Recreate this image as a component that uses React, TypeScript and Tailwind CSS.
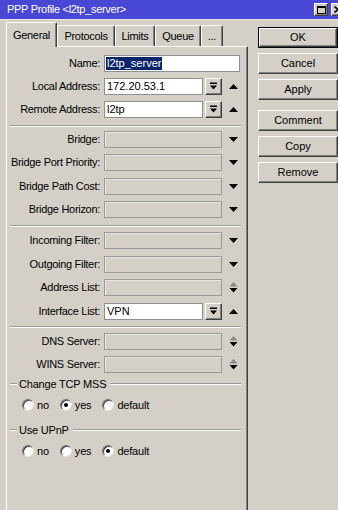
import React from "react";

const raised =
  "border border-t-white border-l-white border-r-[#404040] border-b-[#404040] shadow-[inset_-1px_-1px_0_#808080]";

function ComboIcon() {
  return (
    <svg width="9" height="9" viewBox="0 0 9 9">
      <rect x="1" y="0.5" width="7" height="1.5" fill="#000" />
      <path d="M1 3.5 H8 L4.5 7.5 Z" fill="#000" />
    </svg>
  );
}

function UpArrow() {
  return (
    <svg width="9" height="5" viewBox="0 0 9 5">
      <path d="M0 5 L4.5 0 L9 5 Z" fill="#000" />
    </svg>
  );
}

function DownArrow() {
  return (
    <svg width="9" height="5" viewBox="0 0 9 5">
      <path d="M0 0 H9 L4.5 5 Z" fill="#000" />
    </svg>
  );
}

function UpDown() {
  return (
    <svg width="9" height="11" viewBox="0 0 9 11">
      <path d="M0.5 4.5 L4.5 0 L8.5 4.5 Z" fill="#8a8a8a" />
      <path d="M0.5 6 H8.5 L4.5 10.5 Z" fill="#000" />
    </svg>
  );
}

function Label({ children }: { children: React.ReactNode }) {
  return (
    <div className="w-[94px] pr-[1px] text-right text-[11px] tracking-[-0.3px] leading-none whitespace-nowrap">
      {children}
    </div>
  );
}

function Row({ label, children }: { label: string; children: React.ReactNode }) {
  return (
    <div className="flex items-center h-[17px]">
      <Label>{label}</Label>
      <div className="ml-[3px] flex items-center">{children}</div>
    </div>
  );
}

function ArrowBox({ children }: { children: React.ReactNode }) {
  return <div className="w-[21px] h-[17px] flex items-center justify-center pl-[1px]">{children}</div>;
}

function ComboField({ value }: { value: string }) {
  return (
    <>
      <div className="w-[99px] h-[17px] border border-[#8f8f8f] bg-white flex items-center pl-[2px] text-[11px] leading-none">
        {value}
      </div>
      <div className={`ml-[2px] w-[17px] h-[17px] bg-[#d4d0c8] flex items-center justify-center ${raised}`}>
        <ComboIcon />
      </div>
      <ArrowBox>
        <UpArrow />
      </ArrowBox>
    </>
  );
}

function DisabledField({ kind }: { kind: "down" | "updown" }) {
  return (
    <>
      <div className="w-[118px] h-[17px] border border-[#9a9a9a] bg-[#d4d0c8] shadow-[inset_1px_1px_0_#e8e6e0]" />
      <ArrowBox>{kind === "down" ? <DownArrow /> : <UpDown />}</ArrowBox>
    </>
  );
}

function Separator() {
  return <div className="ml-[3px] w-[231px] border-t border-t-[#9a9a9a] border-b border-b-white" />;
}

function GroupTitle({ children }: { children: React.ReactNode }) {
  return (
    <div className="ml-[3px] w-[231px] flex items-center h-[13px]">
      <div className="w-[7px] border-t border-t-[#9a9a9a] border-b border-b-white" />
      <div className="px-[2px] text-[11px] tracking-[-0.2px] leading-none whitespace-nowrap">{children}</div>
      <div className="flex-1 ml-[2px] border-t border-t-[#9a9a9a] border-b border-b-white" />
    </div>
  );
}

function Radio({ label, checked }: { label: string; checked?: boolean }) {
  return (
    <div className="flex items-center">
      <div className="w-[12px] h-[12px] rounded-full bg-white border border-t-[#707070] border-l-[#707070] border-r-[#e4e2dc] border-b-[#e4e2dc] shadow-[inset_1px_1px_0_#404040] flex items-center justify-center">
        {checked && <div className="w-[4px] h-[4px] rounded-full bg-black" />}
      </div>
      <div className="ml-[3px] text-[11px] leading-none tracking-[-0.2px]">{label}</div>
    </div>
  );
}

function RadioRow({ sel }: { sel: number }) {
  return (
    <div className="ml-[15px] flex items-center gap-[11px] h-[14px]">
      <Radio label="no" checked={sel === 0} />
      <Radio label="yes" checked={sel === 1} />
      <Radio label="default" checked={sel === 2} />
    </div>
  );
}

function Tab({ label, active, w }: { label: string; active?: boolean; w: string }) {
  return (
    <div
      className={`${w} ${
        active ? "h-[25px] -mb-[1px] relative z-10" : "h-[21px]"
      } bg-[#d4d0c8] border-t border-l border-t-white border-l-white border-r border-r-[#404040] shadow-[inset_-1px_0_0_#808080] rounded-t-[2px] flex items-center justify-center text-[11px] tracking-[-0.3px] leading-none`}
    >
      {label}
    </div>
  );
}

function Button({ label, primary }: { label: string; primary?: boolean }) {
  const inner = (
    <div className={`w-full h-full bg-[#d4d0c8] flex items-center justify-center text-[11px] leading-none ${raised}`}>
      {label}
    </div>
  );
  if (primary) {
    return <div className="w-[80px] h-[21px] border border-black">{inner}</div>;
  }
  return <div className="w-[80px] h-[21px]">{inner}</div>;
}

export default function App() {
  return (
    <div className="w-[338px] h-[510px] overflow-hidden bg-[#d4d0c8] text-black font-['Liberation_Sans',Arial,sans-serif] flex flex-col">
      {/* Title bar */}
      <div className="h-[20px] shrink-0 bg-[#4848d4] flex items-center pl-[7px] border-b border-b-[#e6e4de]">
        <div className="text-white text-[11px] tracking-[-0.3px] leading-none whitespace-nowrap">
          PPP Profile &lt;l2tp_server&gt;
        </div>
        <div className="ml-auto mr-[-7px] flex items-center gap-[3px]">
          <div className={`w-[14px] h-[13px] bg-[#d4d0c8] flex items-center justify-center ${raised}`}>
            <div className="w-[9px] h-[8px] border border-black border-t-2" />
          </div>
          <div className={`w-[14px] h-[13px] bg-[#d4d0c8] flex items-center justify-center ${raised}`}>
            <svg width="8" height="7" viewBox="0 0 8 7">
              <path d="M0.5 0.5 L7.5 6.5 M7.5 0.5 L0.5 6.5" stroke="#000" strokeWidth="1.6" />
            </svg>
          </div>
        </div>
      </div>

      <div className="flex flex-1 min-h-0">
        {/* Left column: tabs + panel */}
        <div className="ml-[6px] w-[242px] flex flex-col">
          <div className="flex items-end h-[24px] mt-[2px] shrink-0">
            <Tab label="General" active w="w-[51px]" />
            <Tab label="Protocols" w="w-[58px]" />
            <Tab label="Limits" w="w-[40px]" />
            <Tab label="Queue" w="w-[46px]" />
            <Tab label="..." w="w-[22px]" />
          </div>
          <div className="flex-1 border-t border-l border-t-white border-l-white border-r border-r-[#404040] shadow-[inset_-1px_0_0_#808080] pt-[8px] flex flex-col">
            <div className="flex flex-col gap-[6px]">
              <Row label="Name:">
                <div className="w-[136px] h-[17px] border border-[#8f8f8f] bg-white flex items-center pl-[1px]">
                  <span className="bg-[#0a246a] text-white text-[11px] leading-[13px] px-[1px]">l2tp_server</span>
                </div>
              </Row>
              <Row label="Local Address:">
                <ComboField value="172.20.53.1" />
              </Row>
              <Row label="Remote Address:">
                <ComboField value="l2tp" />
              </Row>
            </div>

            <div className="mt-[7px] mb-[4px]">
              <Separator />
            </div>

            <div className="flex flex-col gap-[6.4px]">
              <Row label="Bridge:">
                <DisabledField kind="down" />
              </Row>
              <Row label="Bridge Port Priority:">
                <DisabledField kind="down" />
              </Row>
              <Row label="Bridge Path Cost:">
                <DisabledField kind="down" />
              </Row>
              <Row label="Bridge Horizon:">
                <DisabledField kind="down" />
              </Row>
            </div>

            <div className="mt-[7px] mb-[5px]">
              <Separator />
            </div>

            <div className="flex flex-col gap-[6.5px]">
              <Row label="Incoming Filter:">
                <DisabledField kind="down" />
              </Row>
              <Row label="Outgoing Filter:">
                <DisabledField kind="down" />
              </Row>
              <Row label="Address List:">
                <DisabledField kind="updown" />
              </Row>
              <Row label="Interface List:">
                <ComboField value="VPN" />
              </Row>
            </div>

            <div className="mt-[6px] mb-[5px]">
              <Separator />
            </div>

            <div className="flex flex-col gap-[6px]">
              <Row label="DNS Server:">
                <DisabledField kind="updown" />
              </Row>
              <Row label="WINS Server:">
                <DisabledField kind="updown" />
              </Row>
            </div>

            <div className="mt-[5px]">
              <GroupTitle>Change TCP MSS</GroupTitle>
            </div>
            <div className="mt-[7.5px]">
              <RadioRow sel={1} />
            </div>

            <div className="mt-[11.5px]">
              <GroupTitle>Use UPnP</GroupTitle>
            </div>
            <div className="mt-[7.5px]">
              <RadioRow sel={2} />
            </div>
          </div>
        </div>

        {/* Right column: buttons */}
        <div className="ml-[10px] mt-[7px] flex flex-col">
          <Button label="OK" primary />
          <div className="mt-[5px]">
            <Button label="Cancel" />
          </div>
          <div className="mt-[5px]">
            <Button label="Apply" />
          </div>
          <div className="mt-[10px]">
            <Button label="Comment" />
          </div>
          <div className="mt-[5px]">
            <Button label="Copy" />
          </div>
          <div className="mt-[5px]">
            <Button label="Remove" />
          </div>
        </div>
      </div>
    </div>
  );
}
